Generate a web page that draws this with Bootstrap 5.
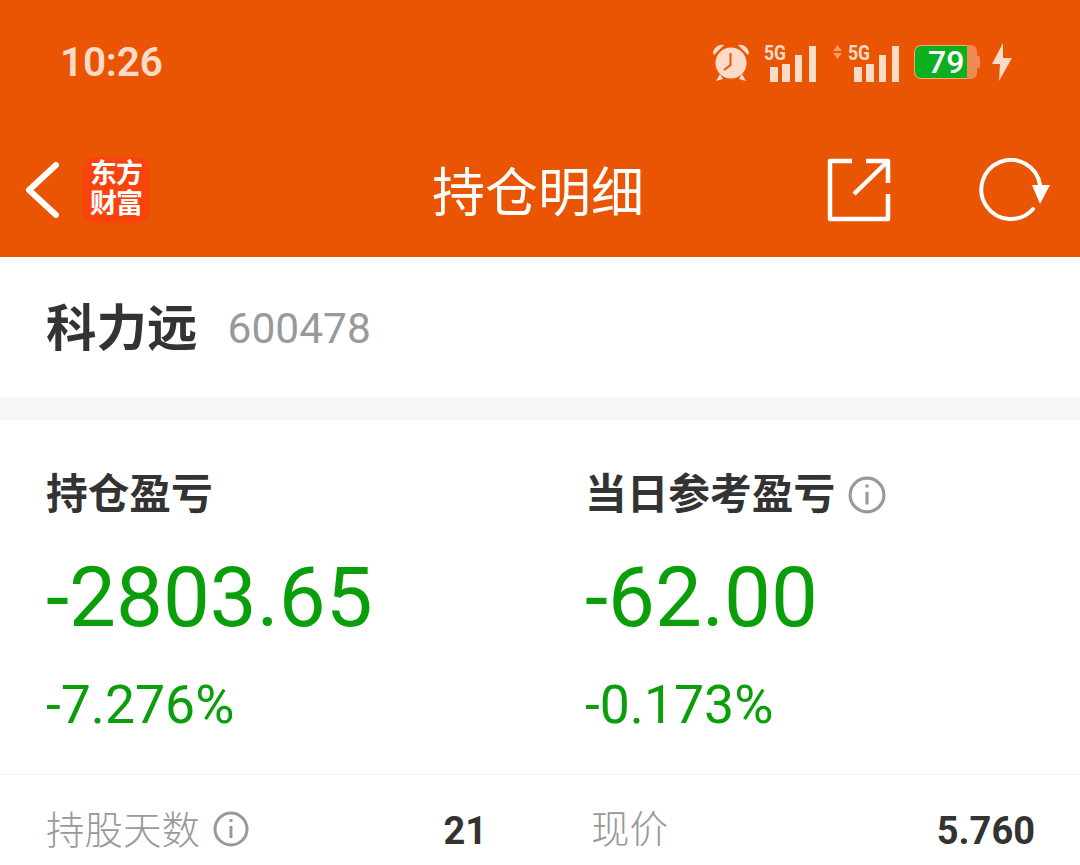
<!DOCTYPE html>
<html lang="zh">

<head>
    <meta charset="UTF-8">
    <meta name="viewport" content="width=device-width, initial-scale=1.0">
    <title>持仓明细</title>
    <link href="https://cdn.jsdelivr.net/npm/bootstrap@5.3.2/dist/css/bootstrap.min.css" rel="stylesheet">
    <script src="https://cdn.jsdelivr.net/npm/bootstrap@5.3.2/dist/js/bootstrap.bundle.min.js"></script>
    <style>
        html, body { height: 865px; overflow: hidden; }
        body { font-family: Roboto, "Noto Sans CJK SC", sans-serif; background: #fff; color: #333; }
        .hd { background: #ea5504; height: 257px; }
        .status-row { height: 124px; padding-left: 60px; }
        .clock { font-size: 40.5px; font-weight: 600; color: #fcdcc9; line-height: 1; letter-spacing: -.2px; }
        .status-icons { margin-left: auto; padding-right: 67px; }
        .batt { width: 66px; height: 34px; margin-left: 15px; }
        .batt-fill { width: 53px; background: #0cb01f; border: 1px solid #f7a877; border-right: 0; border-radius: 7px 0 0 7px; color: #fff; font-size: 32px; font-weight: 500; line-height: 1; padding-left: 13px; }
        .batt-rest { width: 10px; background: #f08a55; border-radius: 0 6px 6px 0; }
        .batt-nub { width: 3px; height: 12px; background: #f08a55; border-radius: 0 2px 2px 0; }
        .bolt-ico { margin-left: 11px; }
        .nav-row { height: 133px; padding-bottom: 2px; }
        .nav-side { flex: 1 1 0; }
        .back-ico { margin-left: 25px; }
        .logo-box { width: 66px; height: 66px; margin-left: 22px; background: #f9430c; border-radius: 12px; color: #fff; font-size: 27px; font-weight: 700; line-height: 30px; padding: 2px 0 0 0; text-align: center; letter-spacing: -1px; }
        .page-title { font-size: 53px; line-height: 1; color: #fff; font-weight: 400; margin-right: 4px; margin-top: 9px; }
        .refresh-ico { margin-left: 87px; margin-right: 30px; }
        .stock-row { height: 140px; padding: 4px 46px 0; }
        .stock-name { font-size: 50.5px; font-weight: 700; color: #333; line-height: 1; }
        .stock-code { font-size: 42.5px; color: #999; margin-left: 30px; line-height: 1; }
        .gap-band { height: 23px; background: #f5f6f8; }
        .pnl-panel { height: 355px; border-bottom: 1px solid #f3f3f3; padding: 52px 0 0 46px; }
        .pnl-left { width: 539px; }
        .pnl-label { font-size: 41.7px; font-weight: 700; line-height: 46px; color: #333; height: 46px; }
        .pnl-num { font-size: 83.5px; line-height: 100px; color: #0a9e0a; margin-top: 30px; }
        .pnl-pct { font-size: 53.5px; line-height: 60px; color: #0a9e0a; margin-top: 27px; }
        .info-ico { margin-left: 13px; }
        .stat-row { padding: 32px 0 0 46px; }
        .stat-l { width: 441px; }
        .stat-r { width: 444px; margin-left: 104px; }
        .stat-label { font-size: 38.5px; color: #999; line-height: 46px; font-weight: 300; }
        .stat-label .info-ico { margin-top: -4px; }
        .stat-val { font-size: 38px; font-weight: 700; color: #333; line-height: 46px; margin-top: 1px; }
    </style>
</head>

<body>
    <div class="hd">
        <div class="status-row d-flex align-items-center">
            <div class="clock">10:26</div>
            <div class="status-icons d-flex align-items-center">
                <!-- alarm -->
                <svg width="40" height="40" viewBox="0 0 40 40" fill="#fcdcc9">
                    <circle cx="20" cy="21" r="15.5"/>
                    <path d="M2 11 C3 5 8 2 13 3 L3 13 Z M38 11 C37 5 32 2 27 3 L37 13 Z"/>
                    <path d="M9 32 L5 39 L12 37 Z M31 32 L35 39 L28 37 Z"/>
                    <path d="M19.5 11 V23 L13 28" fill="none" stroke="#ea5504" stroke-width="2"/>
                </svg>
                <!-- 5G signal -->
                <svg class="ms-2" width="58" height="40" viewBox="0 0 58 40" fill="#fcdcc9">
                    <text x="5" y="18" font-family="Roboto" font-weight="700" font-size="20" textLength="22" lengthAdjust="spacingAndGlyphs">5G</text>
                    <rect x="11" y="25" width="8" height="15"/>
                    <rect x="23" y="22" width="8" height="18"/>
                    <rect x="36" y="13" width="7" height="27"/>
                    <rect x="50" y="4" width="7" height="36"/>
                </svg>
                <svg class="ms-3" width="66" height="40" viewBox="0 0 66 40" fill="#fcdcc9">
                    <path d="M0 9 L4.5 3 L9 9 Z" fill="#f49a66"/>
                    <path d="M0 11 L4.5 17 L9 11 Z" fill="#f49a66"/>
                    <text x="15" y="18" font-family="Roboto" font-weight="700" font-size="20" textLength="22" lengthAdjust="spacingAndGlyphs">5G</text>
                    <rect x="21" y="25" width="8" height="15"/>
                    <rect x="33" y="22" width="8" height="18"/>
                    <rect x="46" y="13" width="7" height="27"/>
                    <rect x="59" y="4" width="7" height="36"/>
                </svg>
                <!-- battery -->
                <div class="batt d-flex align-items-center">
                    <div class="batt-fill h-100 d-flex align-items-center">79</div>
                    <div class="batt-rest h-100"></div>
                    <div class="batt-nub"></div>
                </div>
                <!-- charging bolt -->
                <svg class="bolt-ico" width="22" height="38" viewBox="0 0 22 38" fill="#fcdcc9">
                    <path d="M12 0 L1 21 H9 L8 38 L21 15 H12 Z"/>
                </svg>
            </div>
        </div>
        <div class="nav-row d-flex align-items-center">
            <div class="nav-side d-flex align-items-center">
                <svg class="back-ico" width="36" height="56" viewBox="0 0 36 56" fill="none" stroke="#fff" stroke-width="6" stroke-linecap="round" stroke-linejoin="round">
                    <path d="M31 3 L4 28 L31 53"/>
                </svg>
                <div class="logo-box">东方<br>财富</div>
            </div>
            <div class="page-title">持仓明细</div>
            <div class="nav-side d-flex align-items-center justify-content-end">
                <svg width="64" height="64" viewBox="0 0 64 64" fill="none" stroke="#fff" stroke-width="4.5" stroke-linejoin="round">
                    <path d="M25 3 H3 V61 H61 V36"/>
                    <path d="M39 3 H61 V25"/>
                    <path d="M27 36 L60 4"/>
                </svg>
                <svg class="refresh-ico" width="72" height="64" viewBox="0 0 72 64" fill="none" stroke="#fff" stroke-width="4" stroke-linecap="round">
                    <path d="M55 51 A29.5 29.5 0 1 1 62 27"/>
                    <path d="M54 27 H72 L62 46 Z" fill="#fff" stroke="none"/>
                </svg>
            </div>
        </div>
    </div>

    <div class="stock-row d-flex align-items-center">
        <div class="stock-name">科力远</div>
        <div class="stock-code">600478</div>
    </div>
    <div class="gap-band"></div>

    <div class="pnl-panel d-flex">
        <div class="pnl-left">
            <div class="pnl-label">持仓盈亏</div>
            <div class="pnl-num">-2803.65</div>
            <div class="pnl-pct">-7.276%</div>
        </div>
        <div>
            <div class="pnl-label d-flex align-items-center">当日参考盈亏
                <svg class="info-ico" width="38" height="38" viewBox="0 0 36 36" fill="none" stroke="#999" stroke-width="3">
                    <circle cx="18" cy="18" r="16"/>
                    <path d="M18 15 V27"/>
                    <path d="M18 8 V11"/>
                </svg>
            </div>
            <div class="pnl-num">-62.00</div>
            <div class="pnl-pct">-0.173%</div>
        </div>
    </div>

    <div class="stat-row d-flex">
        <div class="stat-l d-flex justify-content-between">
            <div class="stat-label d-flex align-items-center">持股天数
                <svg class="info-ico" width="36" height="36" viewBox="0 0 36 36" fill="none" stroke="#999" stroke-width="3">
                    <circle cx="18" cy="18" r="16"/>
                    <path d="M18 15 V27"/>
                    <path d="M18 8 V11"/>
                </svg>
            </div>
            <div class="stat-val">21</div>
        </div>
        <div class="stat-r d-flex justify-content-between">
            <div class="stat-label">现价</div>
            <div class="stat-val">5.760</div>
        </div>
    </div>
</body>

</html>
